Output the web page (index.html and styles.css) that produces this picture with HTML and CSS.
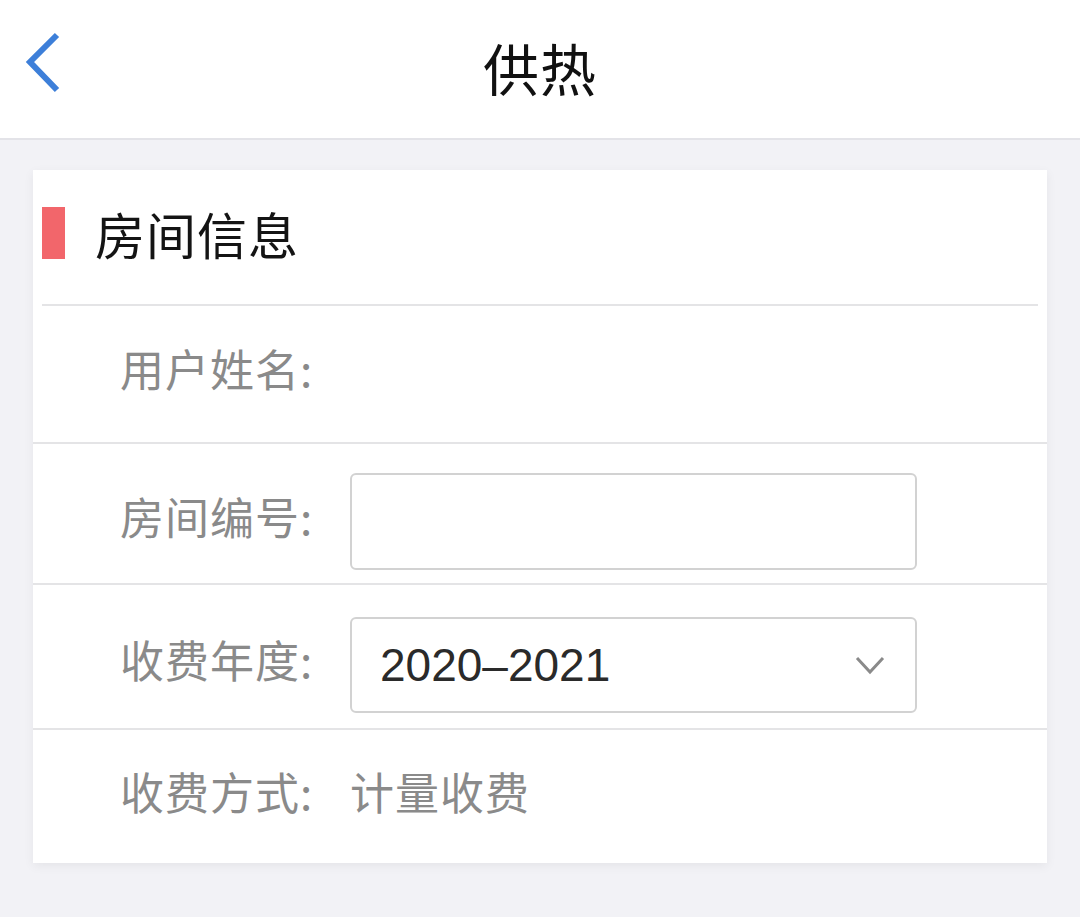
FILE: index.html
```html
<!DOCTYPE html>
<html lang="zh-CN">
<head>
    <meta charset="UTF-8">
    <meta name="viewport" content="width=device-width, initial-scale=1.0">
    <title>供热</title>
    <link rel="stylesheet" href="styles.css">
</head>
<body>
    <header class="topbar">
        <a class="back" href="#">
            <svg width="40" height="64" viewBox="0 0 40 64">
                <polyline points="33,4 6,31 33,59" fill="none" stroke="#3d7fd9" stroke-width="6"/>
            </svg>
        </a>
        <h1>供热</h1>
    </header>

    <main class="page">
        <section class="card">
            <div class="card-head">
                <span class="mark"></span>
                <h2>房间信息</h2>
            </div>

            <div class="row row-name">
                <span class="label">用户姓名:</span>
                <span class="value"></span>
            </div>

            <div class="row row-room">
                <span class="label">房间编号:</span>
                <div class="field"></div>
            </div>

            <div class="row row-year">
                <span class="label">收费年度:</span>
                <div class="field select">
                    <span>2020–2021</span>
                    <svg width="30" height="20" viewBox="0 0 30 20">
                        <polyline points="2,3 15,17 28,3" fill="none" stroke="#8a8a8a" stroke-width="3"/>
                    </svg>
                </div>
            </div>

            <div class="row row-way">
                <span class="label">收费方式:</span>
                <span class="value">计量收费</span>
            </div>
        </section>
    </main>
</body>
</html>
```

FILE: styles.css
```css
body {
    margin: 0;
    padding: 0;
    background-color: #f2f2f6;
    font-family: "Noto Sans CJK SC", "Noto Sans", sans-serif;
    min-height: 100vh;
}

.topbar {
    height: 138px;
    background-color: #fff;
    border-bottom: 2px solid #e3e3e8;
    display: flex;
    align-items: center;
    justify-content: center;
    position: relative;
}

.topbar h1 {
    margin: 0 0 6px;
    font-size: 56px;
    font-weight: 400;
    color: #111;
    letter-spacing: 1px;
}

.back {
    position: absolute;
    left: 24px;
    top: 31px;
    display: block;
}

.page {
    padding: 30px 33px 40px;
}

.card {
    background-color: #fff;
    box-shadow: 0 3px 10px rgba(0, 0, 0, 0.06);
}

.card-head {
    height: 126px;
    margin: 0 9px;
    padding-bottom: 8px;
    border-bottom: 2px solid #e4e4e6;
    display: flex;
    align-items: center;
    gap: 30px;
}

.mark {
    width: 23px;
    height: 52px;
    background-color: #f2666b;
}

.card-head h2 {
    margin: 0;
    font-size: 50px;
    font-weight: 400;
    color: #141414;
    letter-spacing: 1px;
}

.row {
    display: grid;
    grid-template-columns: 230px 567px;
    align-items: center;
    padding-left: 87px;
    border-bottom: 2px solid #e4e4e6;
    box-sizing: border-box;
}

.row-name { height: 138px; }
.row-room {
    height: 141px;
    padding-top: 16px;
}
.row-year {
    height: 145px;
    padding-top: 16px;
}
.row-way {
    height: 133px;
    border-bottom: none;
}

.label,
.value {
    font-size: 44px;
    color: #8a8a8a;
    letter-spacing: 1px;
    margin-bottom: 12px;
}

.field {
    height: 97px;
    border: 2px solid #d2d2d2;
    border-radius: 6px;
    box-sizing: border-box;
}

.select {
    height: 96px;
    display: flex;
    align-items: center;
    justify-content: space-between;
    padding: 0 30px 0 28px;
}

.select span {
    font-family: "Liberation Sans", Arial, sans-serif;
    font-size: 46px;
    color: #2a2a2a;
}
```
